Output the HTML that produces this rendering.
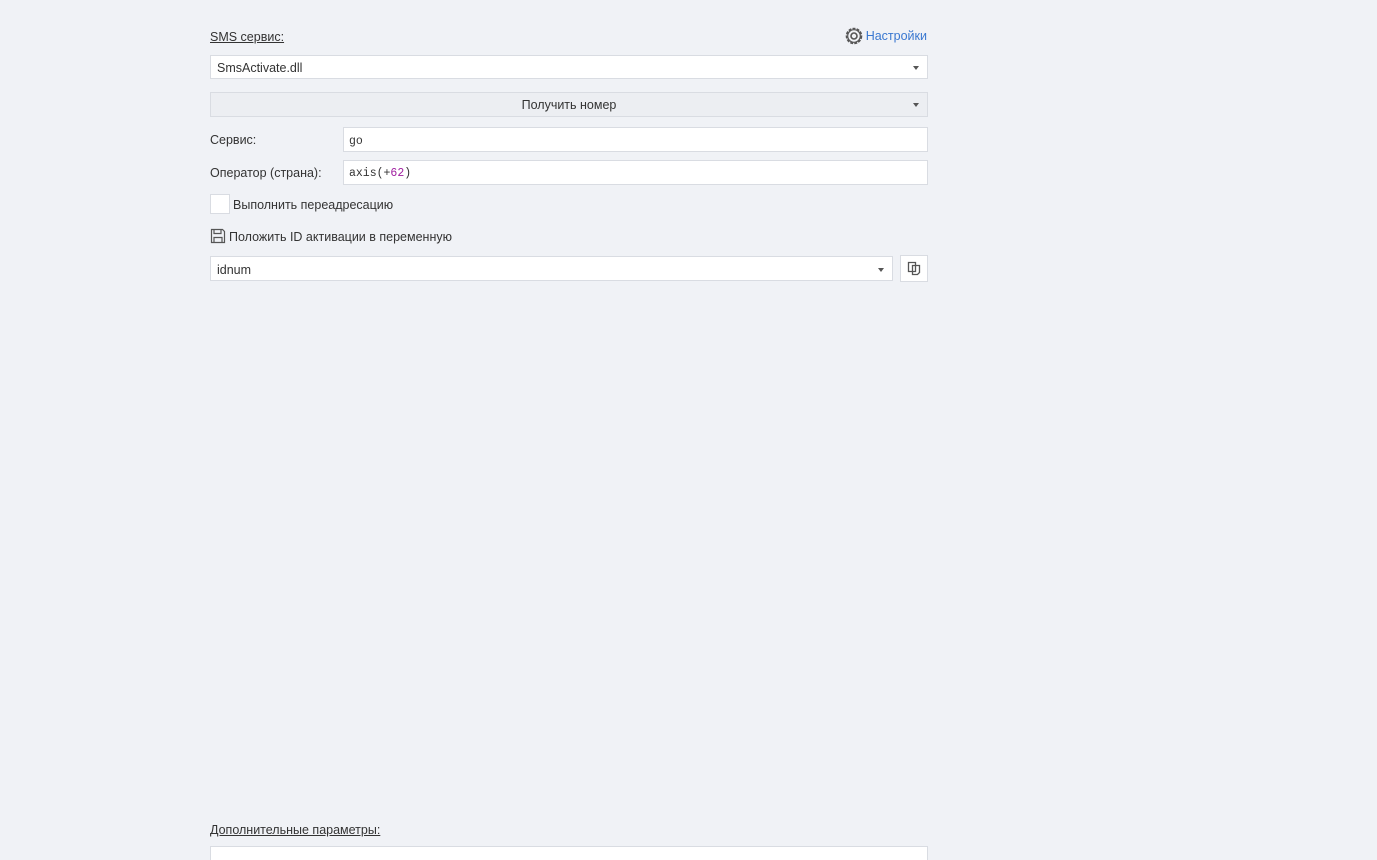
<!DOCTYPE html>
<html><head><meta charset="utf-8"><style>
html,body{margin:0;padding:0;width:1377px;height:860px;overflow:hidden;background:#f0f2f6;font-family:"Liberation Sans","DejaVu Sans",sans-serif;font-size:12.5px;color:#333;}
body{position:relative;}
.a{position:absolute;box-sizing:border-box;}
.box{background:#fff;border:1px solid #d9dce2;}
.lbl{text-decoration:underline;color:#333;}
.arr{position:absolute;width:0;height:0;border-left:3.5px solid transparent;border-right:3.5px solid transparent;border-top:4px solid #555;}
.mono{font-family:"Liberation Mono",monospace;font-size:12px;}
</style></head><body>
<div class="a lbl" style="left:210px;top:30px;">SMS сервис:</div>
<div class="a" style="right:450px;top:26px;display:flex;align-items:center;gap:2px;">
<svg width="20" height="20" viewBox="0 0 20 20"><circle cx="10" cy="10" r="7.5" fill="none" stroke="#555" stroke-width="1.6" stroke-dasharray="3 1.2"/><circle cx="10" cy="10" r="6.3" fill="none" stroke="#555" stroke-width="1.2"/><circle cx="10" cy="10" r="3" fill="none" stroke="#555" stroke-width="1.6"/></svg><span style="color:#3a78d0;">Настройки</span></div>
<div class="a box" style="left:210px;top:55px;width:718px;height:24px;padding:5px 6px;">SmsActivate.dll<div class="arr" style="right:8px;top:10px;"></div></div>
<div class="a" style="left:210px;top:92px;width:718px;height:25px;background:#eceef2;border:1px solid #d9dce2;text-align:center;padding-top:5px;">Получить номер<div class="arr" style="right:8px;top:10px;"></div></div>
<div class="a" style="left:210px;top:133px;">Сервис:</div>
<div class="a box mono" style="left:343px;top:127px;width:585px;height:25px;padding:7px 5px;font-size:11.5px;">go</div>
<div class="a" style="left:210px;top:166px;">Оператор (страна):</div>
<div class="a box mono" style="left:343px;top:160px;width:585px;height:25px;padding:6px 5px;font-size:11.5px;">axis(+<span style="color:#a020a0">62</span>)</div>
<div class="a box" style="left:210px;top:194px;width:20px;height:20px;"></div>
<div class="a" style="left:233px;top:198px;">Выполнить переадресацию</div>
<div class="a" style="left:210px;top:228px;width:16px;height:16px;"><svg width="16" height="16" viewBox="0 0 16 16"><path d="M1.5 1.5h11l2 2v11h-13z" fill="none" stroke="#555" stroke-width="1.2"/><path d="M4 1.5v4h7v-4M4 14.5v-5h8v5" fill="none" stroke="#555" stroke-width="1.2"/></svg></div>
<div class="a" style="left:229px;top:230px;">Положить ID активации в переменную</div>
<div class="a box" style="left:210px;top:256px;width:683px;height:25px;padding:6px 6px;">idnum<div class="arr" style="right:8px;top:11px;"></div></div>
<div class="a box" style="left:900px;top:255px;width:28px;height:27px;"><svg width="26" height="25" viewBox="0 0 26 25"><path d="M7.5 6.5h7v9h-7z M11.5 9.5h7v7l-2 2h-5z" fill="none" stroke="#555" stroke-width="1.3"/></svg></div>
<div class="a lbl" style="left:210px;top:823px;">Дополнительные параметры:</div>
<div class="a" style="left:210px;top:846px;width:718px;height:14px;background:#fff;border:1px solid #d9dce2;border-bottom:none;"></div>
</body></html>
